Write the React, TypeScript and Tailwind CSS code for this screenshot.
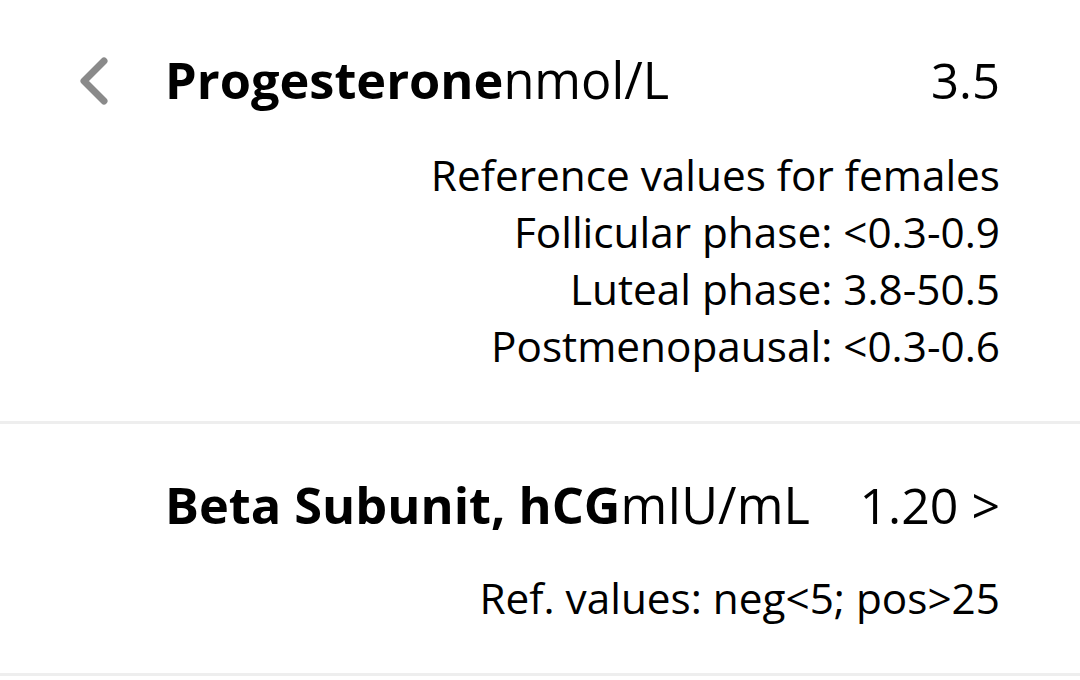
export default function App() {
  return (
    <main
      className="w-[1080px] h-[680px] bg-white text-black overflow-hidden"
      style={{ fontFamily: '"Open Sans", "Noto Sans", sans-serif' }}
    >
      <section className="h-[424px] border-b-[3px] border-[#eeeeee] pt-[40px] pr-[80px]">
        <div className="flex items-center h-[80px]">
          <div className="w-[165px] flex items-center pl-[78px] pt-[2px]">
            <svg width="32" height="48" viewBox="0 0 32 48" fill="none">
              <path d="M26 4 L6 24 L26 44" stroke="#8a8a8a" strokeWidth="7" strokeLinecap="round" strokeLinejoin="round" />
            </svg>
          </div>
          <h1 className="flex-1 text-[50.5px] leading-none">
            <span className="font-bold">Progesterone</span>
            <span>nmol/L</span>
          </h1>
          <span className="text-[49px] leading-none">3.5</span>
        </div>
        <div className="mt-[26px] text-right text-[42.3px] leading-[57px]">
          <p>Reference values for females</p>
          <p>Follicular phase: &lt;0.3-0.9</p>
          <p>Luteal phase: 3.8-50.5</p>
          <p>Postmenopausal: &lt;0.3-0.6</p>
        </div>
      </section>
      <section className="h-[252px] border-b-[3px] border-[#eeeeee] pt-[41px] pl-[165px] pr-[80px]">
        <div className="flex items-center h-[80px]">
          <h2 className="flex-1 text-[50.5px] leading-none">
            <span className="font-bold">Beta Subunit, hCG</span>
            <span>mIU/mL</span>
          </h2>
          <span className="text-[50px] leading-none">1.20 &gt;</span>
        </div>
        <p className="mt-[24px] text-right text-[42.3px] leading-[57px]">Ref. values: neg&lt;5; pos&gt;25</p>
      </section>
    </main>
  )
}
